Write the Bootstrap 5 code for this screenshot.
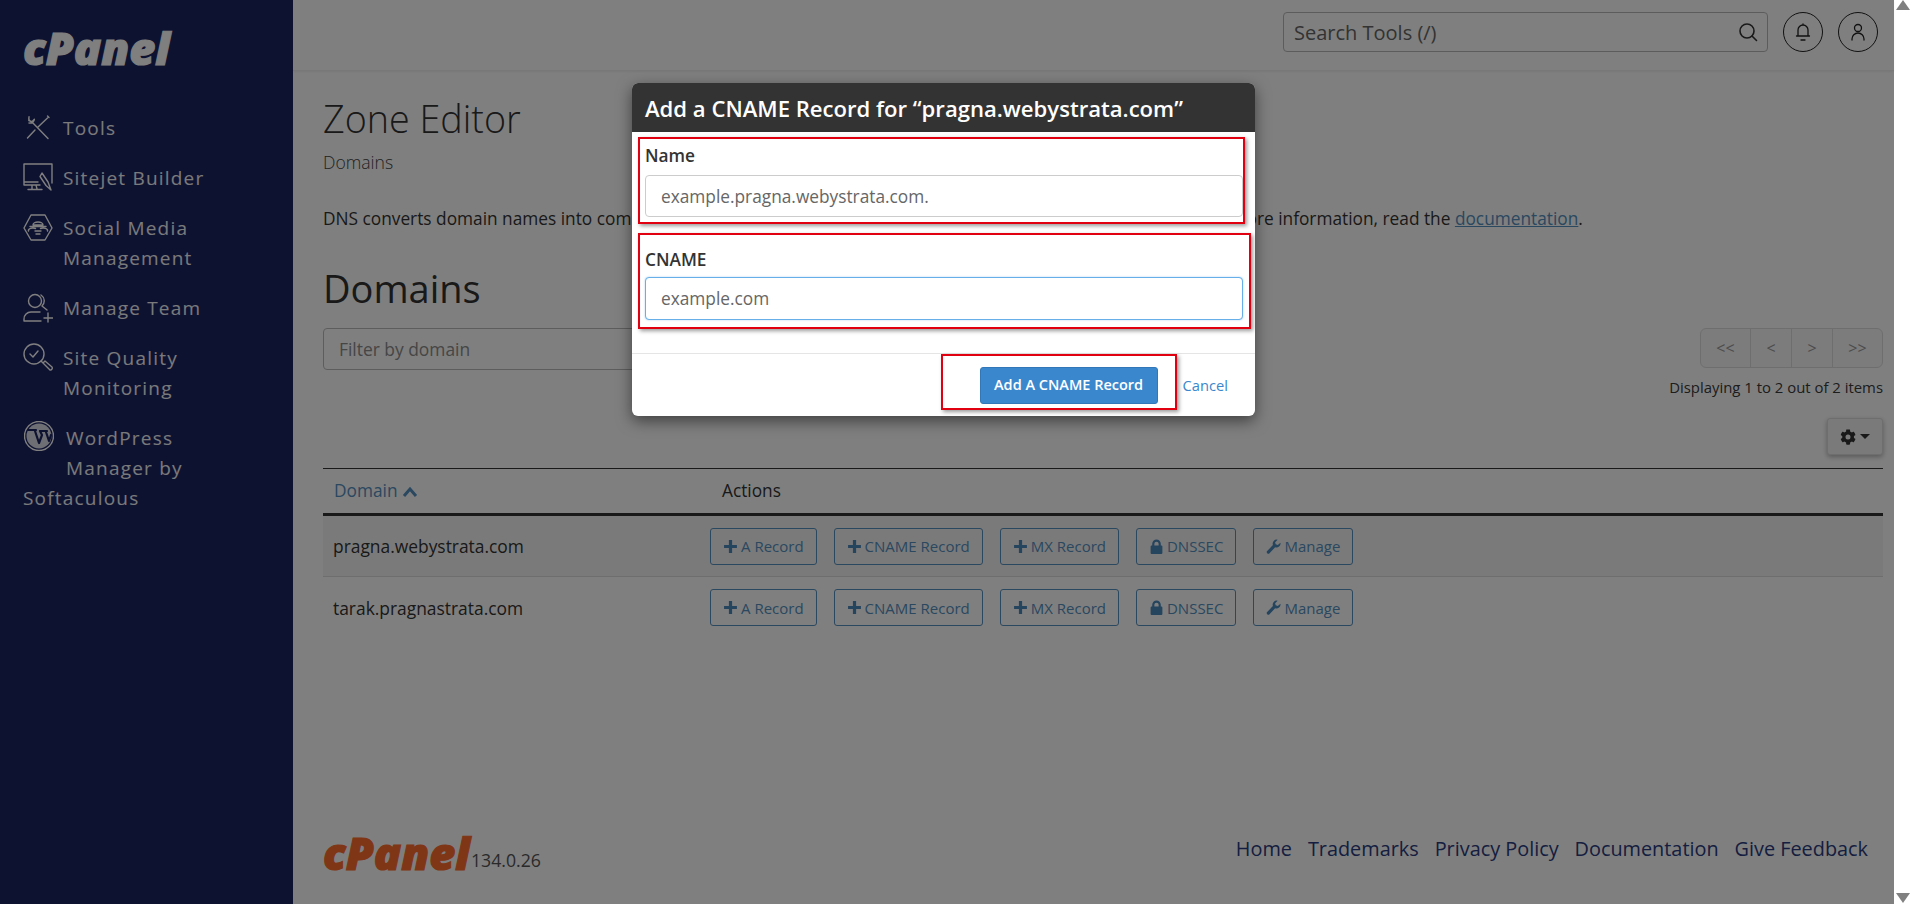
<!DOCTYPE html>
<html lang="en">
<head>
<meta charset="utf-8">
<title>Zone Editor</title>
<link rel="stylesheet" href="https://cdn.jsdelivr.net/npm/bootstrap@5.3.0/dist/css/bootstrap.min.css">
<style>
html,body{height:904px;overflow:hidden;margin:0;background:#fff}
body{font-family:"Open Sans","Noto Sans",sans-serif;color:#333;font-size:17.3px}
.shell{display:flex;width:1912px;height:904px}
.stage{position:relative;width:1894px;height:904px;display:flex;flex:none}
.fakebar{width:18px;height:904px;background:#fff;display:flex;flex-direction:column;justify-content:space-between;align-items:center;flex:none}
.tri-up{width:0;height:0;border-left:7px solid transparent;border-right:7px solid transparent;border-bottom:10px solid #808080}
.tri-down{width:0;height:0;border-left:7px solid transparent;border-right:7px solid transparent;border-top:10px solid #808080;margin-bottom:1px}
.side{width:293px;flex:none;background:#1d2563;padding:33px 50px 0 23px;color:#fff}
.brand{display:block;width:147px;height:46px;margin-bottom:34px;overflow:visible}
.brand text,.flogo text{font-family:"Open Sans",sans-serif;font-weight:800;font-style:italic;font-size:44px;stroke-width:1.2}
.brand text{fill:#fff;stroke:#fff}
.side-item{display:block;color:#f4f4f6;text-decoration:none;font-size:19px;line-height:30px;letter-spacing:1.2px;margin-bottom:20px}
.side-item svg{float:left;width:30px;height:30px;margin-right:10px;margin-bottom:8px;stroke:#fff;fill:none;stroke-width:1.4;stroke-linecap:round;stroke-linejoin:round}
.side-item.wp svg{margin:-2px 12px 24px 1px}
.main{flex:1;min-width:0;display:flex;flex-direction:column;background:#fff}
.topbar{height:71px;flex:none;display:flex;justify-content:flex-end;align-items:flex-start;gap:15px;padding:12px 16px 0 0;border-bottom:1px solid #f0f0f0;box-shadow:0 1px 2px rgba(0,0,0,.06);background:#fff}
.search{position:relative;width:485px}
.search .form-control{height:40px;font-size:20px;padding:0 40px 0 10px;border-color:#b9b9b9;border-radius:4px;background:transparent}
.search .form-control::placeholder{color:#666}
.search svg{position:absolute;right:10px;top:10px;width:20px;height:20px}
.round{width:40px;height:40px;border:1px solid #222;border-radius:50%;display:flex;align-items:center;justify-content:center;background:transparent;padding:0}
.round svg{width:20px;height:20px}
.content{padding:26px 11px 0 30px;flex:1;display:flex;flex-direction:column}
h1.title{font-size:37.7px;font-weight:300;line-height:44px;margin:0;color:#333}
.crumb{font-size:17.6px;font-weight:300;line-height:24px;margin:9px 0 0;color:#444}
.intro{font-size:17.3px;line-height:24px;margin:33px 0 0;white-space:nowrap}
a.lnk{color:#5590c0}
h2.sec{font-size:38px;font-weight:500;line-height:46px;margin:34px 0 0;color:#333}
.tools{display:flex;justify-content:space-between;align-items:flex-start;margin-top:17px}
.filter{width:660px;height:42px;font-size:17.4px;padding-left:15px;border-color:#bbb;border-radius:4px}
.filter::placeholder{color:#8c8c8c}
.rightcol{display:flex;flex-direction:column;align-items:flex-end}
.pager .btn{height:40px;font-size:16px;color:#999;border-color:#ddd;background:#f8f8f8;opacity:1;font-family:"Open Sans",sans-serif;padding:0}
.pager .btn:nth-child(1),.pager .btn:nth-child(4){width:51px}
.pager .btn:nth-child(2),.pager .btn:nth-child(3){width:42px}
.showing{font-size:14.9px;line-height:20px;margin-top:9px;color:#3a3a3a}
.gearrow{display:flex;justify-content:flex-end;margin-top:21px}
.gear{width:56px;height:37px;padding:0;background:#f4f4f4;border:1px solid #ddd;border-radius:3px;box-shadow:0 2px 5px rgba(0,0,0,.3);display:flex;align-items:center;justify-content:center;gap:4px}
.gear svg{width:16px;height:16px}
.caret-d{width:0;height:0;border-left:5px solid transparent;border-right:5px solid transparent;border-top:5px solid #333}
.zones{margin:13px 0 0;border-top:1px solid #333;--bs-table-bg:transparent;table-layout:fixed;width:1560px}
.zones th{font-weight:400;font-size:17.3px;height:46px;vertical-align:middle;padding:0 0 0 11px;border-bottom:3px solid #333;color:#333}
.zones th:nth-child(2){padding-left:12px}
.zones th a{color:#5590c0;text-decoration:none}
.zones th svg{width:16px;height:12px;vertical-align:-1px}
.zones td{height:62px;vertical-align:middle;padding:0 0 0 10px;border-bottom:1px solid #ddd;font-size:17.4px;color:#333}
.zones tr.last td{border-bottom:0}
.zones td.act{padding:0}
.zones tbody tr:first-child td{background:#f5f5f5}
.act{white-space:nowrap}
.rbtn{height:37px;padding:0 12px;font-size:15px;color:#5590c0;border:1px solid #5590c0;background:transparent;border-radius:3px;margin-right:17px;display:inline-flex;align-items:center;gap:3px}
.rbtn svg{width:15px;height:15px;fill:#4a88bc}
.foot{margin-top:auto;height:68px;display:flex;justify-content:space-between;padding-right:15px}
.flogo{display:flex;align-items:flex-start;height:46px;padding-top:2px}
.flogo svg{width:147px;height:46px;display:block;overflow:visible}
.flogo text{fill:#ff6c2c;stroke:#ff6c2c}
.ver{font-size:17.7px;line-height:24px;color:#555;margin:10px 0 0 1px}
.flinks{display:flex;gap:16px;font-size:19.85px;line-height:26px}
.flinks a{color:#2a3c80;text-decoration:none}
.modal-backdrop.dim{position:absolute;left:0;top:0;width:1894px;height:904px;background:#000;opacity:.5}
.modal.sheet{position:absolute;left:0;top:0;width:1894px;height:904px;display:block;overflow:hidden}
.sheet .modal-dialog{width:623px;max-width:623px;margin:83px 0 0 632px}
.sheet .modal-content{border:0;border-radius:6px;box-shadow:0 5px 15px rgba(0,0,0,.5);overflow:hidden;position:relative;height:333px;display:block}
.sheet .modal-header{background:#333;color:#fff;height:49px;padding:0 13px;border:0;border-radius:0}
.sheet .modal-title{font-size:22.1px;font-weight:600;line-height:28px}
.sheet .modal-body{padding:13px 13px 0;height:221px}
.sheet label{font-size:17.3px;font-weight:600;color:#333;display:block;line-height:22px;margin:0 0 8px}
.sheet .form-control{height:42px;font-size:17.3px;padding:0 15px;width:598px;color:#555;border-color:#ccc;border-radius:4px}
.sheet .form-control::placeholder{color:#666}
.sheet .form-control.focus{height:43px;border-color:#66afe9;box-shadow:0 0 2px rgba(102,175,233,.6)}
.sheet .group-a{margin-bottom:32px}
.sheet .group-b label{margin-bottom:6px}
.sheet .modal-footer{border-top:1px solid #e5e5e5;height:63px;padding:0 27px 0 0;justify-content:flex-end;align-items:center;gap:25px;flex-wrap:nowrap}
.sheet .modal-footer>*{margin:0}
.addbtn{background:#3a87cd;border:1px solid #3278b8;color:#fff;height:37px;width:178px;padding:0;font-size:14.5px;font-weight:600;border-radius:3px}
.cancel{font-size:14.7px;color:#3a87cd;text-decoration:none}
.redbox{position:absolute;border:2px solid #e0000f;box-shadow:2px 2px 4px rgba(0,0,0,.4);pointer-events:none}
.m1{left:6px;top:54px;width:607px;height:87px}
.m2{left:6px;top:150px;width:613px;height:96px}
.m3{left:309px;top:271px;width:236px;height:56px}
</style>
</head>
<body>
<div class="shell">
<div class="stage">
  <nav class="side">
    <svg class="brand" viewBox="0 0 147 46"><text x="0" y="32" textLength="147" lengthAdjust="spacingAndGlyphs">cPanel</text></svg>
    <a class="side-item" href="#"><svg viewBox="0 0 30 30"><path d="M9 9l16 16.500M8.500 9A4.500 4.500 0 0 1 6 3.800l-.2 3.700 3.200 1.200 2.400-2.500A4.300 4.300 0 0 1 6 10M24.500 5l-9.500 9M26 4.500l-1.500-1.500M12 17l-7.500 8"/></svg>Tools</a>
    <a class="side-item" href="#"><svg viewBox="0 0 30 30"><path d="M17 22H1V1h28v19M1 19h14M9 22v4M5 26.500h14M13 22l1 4M19 10l6 9 3 8-5-4.500-6-9z"/></svg>Sitejet Builder</a>
    <a class="side-item" href="#"><svg viewBox="0 0 30 30"><path d="M8 2h14l7 13-7 12H8L1 15z"/><path d="M10 12a5 3 0 0 1 10 0zM7 13.500h16M5.500 18a4.500 2.500 0 0 1 7-2.500M24.500 18a4.500 2.500 0 0 0-7-2.500M12 18h6M13 21h4"/></svg>Social Media Management</a>
    <a class="side-item" href="#"><svg viewBox="0 0 30 30"><circle cx="12" cy="8" r="6.500"/><path d="M18 2a7 7 0 0 1 1 11l5 4M1 28v-2a7 7 0 0 1 7-7h9M1 28h17M25 20v9M21 25h9"/></svg>Manage Team</a>
    <a class="side-item" href="#"><svg viewBox="0 0 30 30"><circle cx="11" cy="11" r="10"/><path d="M7 11l3 3 5-6M18 18l2 2M20 20l7 7a2 2 0 0 0 2-3l-7-6z"/></svg>Site Quality Monitoring</a>
    <a class="side-item wp" href="#"><svg viewBox="0 0 30 30"><circle cx="15" cy="15" r="14.500"/><circle cx="15" cy="15" r="12.500" fill="#fff" stroke="none" opacity=".85"/><path d="M4 9h8l-1 1 4 12 3-8-2-4h7l-1 1 3 9 2-6" fill="none" stroke="#1d2563" stroke-width="2.200"/></svg>WordPress Manager by Softaculous</a>
  </nav>
  <div class="main">
    <header class="topbar">
      <div class="search">
        <input class="form-control" placeholder="Search Tools (/)">
        <svg viewBox="0 0 20 20" fill="none" stroke="#333" stroke-width="1.600" stroke-linecap="round"><circle cx="9" cy="9" r="7"/><path d="M14 14l4.500 4.500"/></svg>
      </div>
      <button class="round" aria-label="Notifications"><svg viewBox="0 0 20 20" fill="none" stroke="#222" stroke-width="1.300" stroke-linecap="round"><path d="M5 14V8a5 5 0 0 1 10 0v6M3.500 14h13M8 18h4M10 3V2"/></svg></button>
      <button class="round" aria-label="Account"><svg viewBox="0 0 20 20" fill="none" stroke="#222" stroke-width="1.300" stroke-linecap="round"><circle cx="10" cy="6" r="3.500"/><path d="M4 18v-1a6 6 0 0 1 12 0v1"/></svg></button>
    </header>
    <div class="content">
      <h1 class="title">Zone Editor</h1>
      <p class="crumb">Domains</p>
      <p class="intro">DNS converts domain names into computer-readable IP addresses. Use this feature to manage DNS records. For more information, read the <a class="lnk" href="#">documentation</a>.</p>
      <h2 class="sec">Domains</h2>
      <div class="tools">
        <input class="form-control filter" placeholder="Filter by domain">
        <div class="rightcol">
          <div class="btn-group pager" role="group">
            <button class="btn" disabled>&lt;&lt;</button><button class="btn" disabled>&lt;</button><button class="btn" disabled>&gt;</button><button class="btn" disabled>&gt;&gt;</button>
          </div>
          <div class="showing">Displaying 1 to 2 out of 2 items</div>
        </div>
      </div>
      <div class="gearrow">
        <button class="gear" aria-label="Settings"><svg viewBox="0 0 512 512" fill="#333"><path d="M487 315l-42-25a176 176 0 0 0 0-68l42-25c5-3 7-9 5-14-11-35-30-67-54-93-4-4-10-5-15-2l-42 25c-17-15-37-26-59-34V30c0-6-4-11-9-12-36-8-73-8-107 0-6 1-10 6-10 12v49c-21 8-41 19-59 34L95 88c-5-3-11-2-15 2-24 26-43 58-54 93-2 5 0 11 5 14l42 25a176 176 0 0 0 0 68l-42 25c-5 3-7 9-5 14 11 35 30 67 54 93 4 4 10 5 15 2l42-25c17 15 37 26 59 34v49c0 6 4 11 9 12 36 8 73 8 107 0 6-1 10-6 10-12v-49c21-8 41-19 59-34l42 25c5 3 11 2 15-2 24-26 43-58 54-93 2-5 0-11-5-14zM256 336a80 80 0 1 1 0-160 80 80 0 0 1 0 160z"/></svg><span class="caret-d"></span></button>
      </div>
      <table class="table zones">
        <colgroup><col style="width:387px"><col></colgroup>
        <thead><tr><th><a href="#">Domain <svg viewBox="0 0 16 12" fill="none" stroke="#5590c0" stroke-width="3"><path d="M2 10l6-7 6 7"/></svg></a></th><th>Actions</th></tr></thead>
        <tbody>
          <tr><td>pragna.webystrata.com</td><td class="act">
            <button class="rbtn"><svg viewBox="0 0 14 14"><path d="M5.500 1h3v4.500H13v3H8.500V13h-3V8.500H1v-3h4.500z"/></svg>A Record</button><button class="rbtn"><svg viewBox="0 0 14 14"><path d="M5.500 1h3v4.500H13v3H8.500V13h-3V8.500H1v-3h4.500z"/></svg>CNAME Record</button><button class="rbtn"><svg viewBox="0 0 14 14"><path d="M5.500 1h3v4.500H13v3H8.500V13h-3V8.500H1v-3h4.500z"/></svg>MX Record</button><button class="rbtn"><svg viewBox="0 0 14 14"><path fill-rule="evenodd" d="M3 6V4.500a4 4 0 0 1 8 0V6h.500a1 1 0 0 1 1 1v6a1 1 0 0 1-1 1h-9a1 1 0 0 1-1-1V7a1 1 0 0 1 1-1zm2 0h4V4.500a2 2 0 0 0-4 0z"/></svg>DNSSEC</button><button class="rbtn"><svg viewBox="0 0 14 14"><path d="M13.500 3.500a3.800 3.800 0 0 1-5 4.200L3.300 13.200a1.400 1.400 0 0 1-2.200-2.100l5.400-5.500a3.800 3.800 0 0 1 4.400-5L8.500 3l.5 2 2 .5z"/></svg>Manage</button>
          </td></tr>
          <tr class="last"><td>tarak.pragnastrata.com</td><td class="act">
            <button class="rbtn"><svg viewBox="0 0 14 14"><path d="M5.500 1h3v4.500H13v3H8.500V13h-3V8.500H1v-3h4.500z"/></svg>A Record</button><button class="rbtn"><svg viewBox="0 0 14 14"><path d="M5.500 1h3v4.500H13v3H8.500V13h-3V8.500H1v-3h4.500z"/></svg>CNAME Record</button><button class="rbtn"><svg viewBox="0 0 14 14"><path d="M5.500 1h3v4.500H13v3H8.500V13h-3V8.500H1v-3h4.500z"/></svg>MX Record</button><button class="rbtn"><svg viewBox="0 0 14 14"><path fill-rule="evenodd" d="M3 6V4.500a4 4 0 0 1 8 0V6h.500a1 1 0 0 1 1 1v6a1 1 0 0 1-1 1h-9a1 1 0 0 1-1-1V7a1 1 0 0 1 1-1zm2 0h4V4.500a2 2 0 0 0-4 0z"/></svg>DNSSEC</button><button class="rbtn"><svg viewBox="0 0 14 14"><path d="M13.500 3.500a3.800 3.800 0 0 1-5 4.200L3.300 13.200a1.400 1.400 0 0 1-2.200-2.100l5.400-5.500a3.800 3.800 0 0 1 4.400-5L8.500 3l.5 2 2 .5z"/></svg>Manage</button>
          </td></tr>
        </tbody>
      </table>
      <footer class="foot">
        <div class="flogo"><svg viewBox="0 0 147 46"><text x="0" y="32" textLength="147" lengthAdjust="spacingAndGlyphs">cPanel</text></svg><span class="ver">134.0.26</span></div>
        <div class="flinks"><a href="#">Home</a><a href="#">Trademarks</a><a href="#">Privacy Policy</a><a href="#">Documentation</a><a href="#">Give Feedback</a></div>
      </footer>
    </div>
  </div>
  <div class="modal-backdrop dim"></div>
  <div class="modal sheet" role="dialog">
    <div class="modal-dialog">
      <div class="modal-content">
        <div class="modal-header"><div class="modal-title">Add a CNAME Record for “pragna.webystrata.com”</div></div>
        <div class="modal-body">
          <div class="group-a"><label>Name</label><input class="form-control" placeholder="example.pragna.webystrata.com."></div>
          <div class="group-b"><label>CNAME</label><input class="form-control focus" placeholder="example.com"></div>
        </div>
        <div class="modal-footer"><button class="addbtn">Add A CNAME Record</button><a class="cancel" href="#">Cancel</a></div>
        <div class="redbox m1"></div><div class="redbox m2"></div><div class="redbox m3"></div>
      </div>
    </div>
  </div>
</div>
<div class="fakebar"><span class="tri-up"></span><span class="tri-down"></span></div>
</div>
</body>
</html>
